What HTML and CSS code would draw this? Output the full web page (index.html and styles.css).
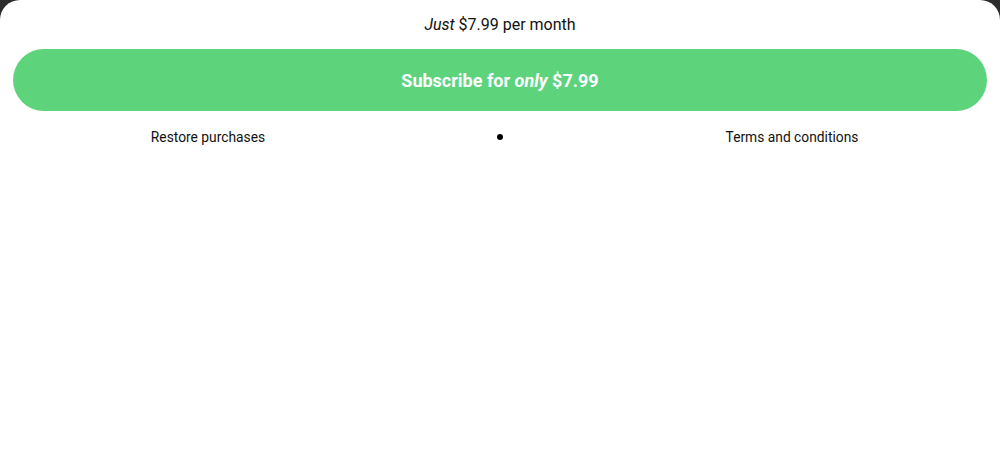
FILE: index.html
```html
<!DOCTYPE html>
<html>
<head>
<meta charset="utf-8">
<link rel="stylesheet" href="styles.css">
</head>
<body>
<div class="sheet">
  <p class="price"><em>Just</em> $7.99 per month</p>
  <button class="subscribe">Subscribe for <em>only</em> $7.99</button>
  <div class="links">
    <span class="link">Restore purchases</span>
    <span class="dot"></span>
    <span class="link">Terms and conditions</span>
  </div>
</div>
</body>
</html>
```
FILE: styles.css
```css
html, body {
  margin: 0;
  padding: 0;
  background: #2b2b2b;
  height: 100%;
}
.sheet {
  background: #ffffff;
  height: 450px;
  border-radius: 20px 20px 0 0;
  font-family: Roboto, "Noto Sans", sans-serif;
  color: #111;
  padding: 0 13px;
  box-sizing: border-box;
  display: flex;
  flex-direction: column;
}
.price {
  margin: 0;
  padding-top: 14px;
  height: 49px;
  box-sizing: border-box;
  text-align: center;
  font-size: 16px;
  line-height: 22px;
}
.subscribe {
  margin-top: 0;
  height: 62px;
  border: none;
  border-radius: 31px;
  background: #5dd37c;
  color: #ffffff;
  font-family: Roboto, "Noto Sans", sans-serif;
  font-size: 18px;
  font-weight: 700;
}
.links {
  display: grid;
  grid-template-columns: 1fr 168px 1fr;
  margin: 0 -13px;
  align-items: center;
  height: 52px;
  font-size: 13.8px;
}
.link {
  text-align: center;
}
.dot {
  justify-self: center;
  width: 6px;
  height: 6px;
  border-radius: 50%;
  background: #000;
}
```
